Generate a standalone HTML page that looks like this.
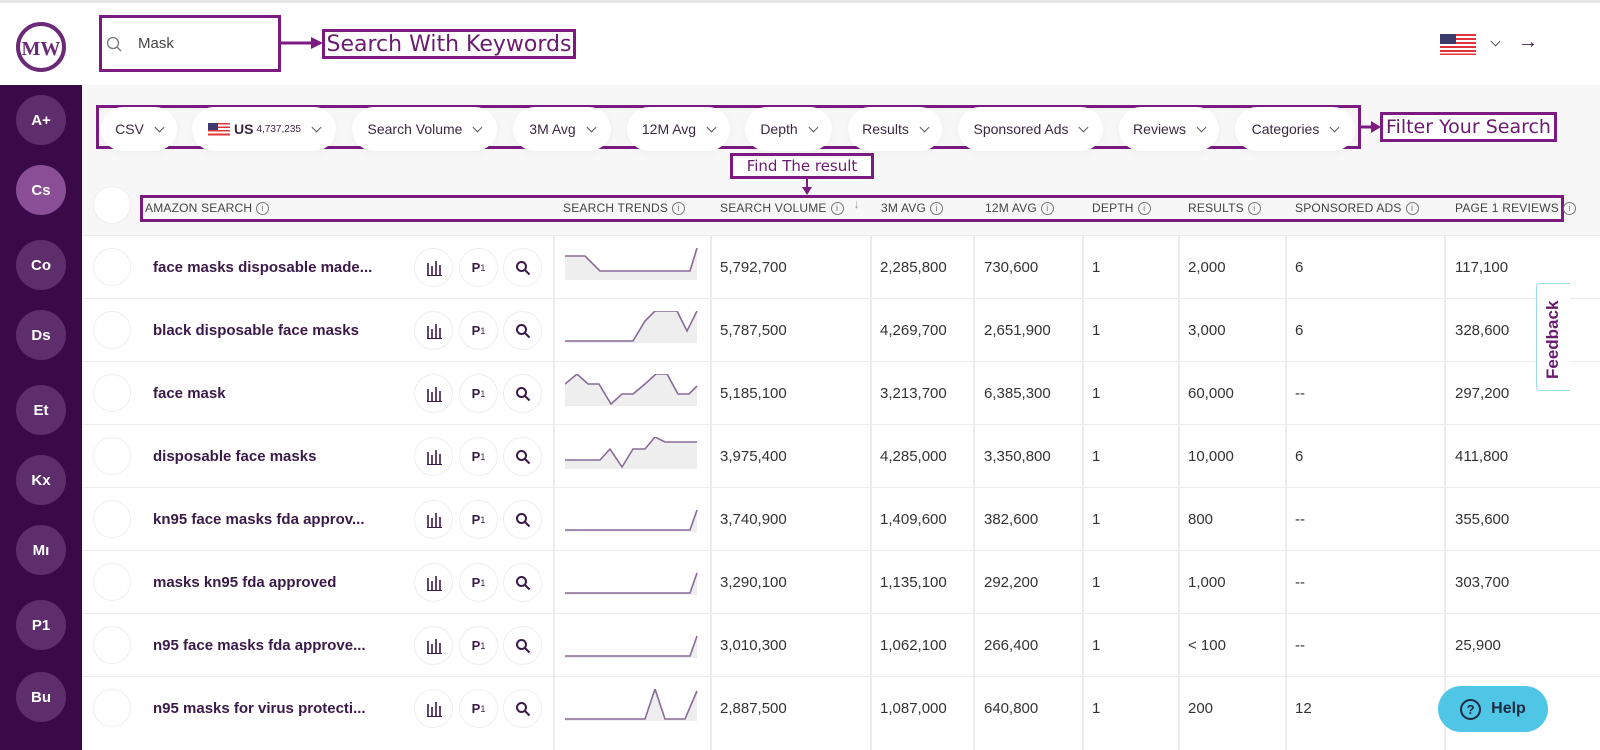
<!DOCTYPE html>
<html><head><meta charset="utf-8">
<style>
*{box-sizing:border-box;margin:0;padding:0}
body{width:1600px;height:750px;overflow:hidden;background:#fff;font-family:"Liberation Sans",sans-serif;position:relative;color:#333}
.abs{position:absolute}
.topline{left:0;top:0;width:1600px;height:3px;background:#e6e6e6}
.side{left:0;top:85px;width:82px;height:665px;background:#3a0a48}
.sc{position:absolute;left:16px;width:50px;height:50px;border-radius:50%;background:#5e2d6c;color:#fff;font-weight:bold;font-size:15px;display:flex;align-items:center;justify-content:center}
.gray{left:82px;top:85px;width:1518px;height:150px;background:#f7f7f7}
.pill{position:absolute;top:107px;height:44px;border-radius:22px;background:#fff;font-size:14px;color:#3a2a40;display:flex;align-items:center;justify-content:center;gap:8px;box-shadow:0 2px 8px rgba(0,0,0,.04)}
.chev{width:7px;height:7px;border-right:1.5px solid #555;border-bottom:1.5px solid #555;transform:rotate(45deg);margin-top:-4px;margin-left:4px}
.ann{position:absolute;border:3px solid #7b1a80;font-family:"DejaVu Sans",sans-serif;color:#6a1a70;display:flex;align-items:center;justify-content:center;background:#fff}
.hd{position:absolute;top:201px;font-size:12px;color:#444;display:flex;align-items:center;gap:4px;letter-spacing:.2px}
.i{width:13px;height:13px;border:1.3px solid #777;border-radius:50%;font-size:9px;display:inline-flex;align-items:center;justify-content:center;color:#777}
.row{position:absolute;left:82px;width:1518px;height:63px;border-top:1.5px solid #ececec}
.cell{position:absolute;top:0;height:63px;display:flex;align-items:center;font-size:15px;color:#333}
.kw{color:#3a1a48;font-weight:bold;font-size:15px}
.btn{position:absolute;top:12px;width:39px;height:39px;border:1px solid #eee;border-radius:50%;display:flex;align-items:center;justify-content:center;color:#3a1a48;font-size:13px;font-weight:bold}
.vl{position:absolute;top:235px;width:1.5px;height:515px;background:#ececec}
.chk{position:absolute;left:11px;top:12px;width:38px;height:38px;border:1px solid #eee;border-radius:50%}
</style></head><body>
<div class="abs topline"></div>
<!-- logo -->
<svg class="abs" style="left:14px;top:20px" width="54" height="54" viewBox="0 0 54 54"><circle cx="27" cy="27" r="23" fill="none" stroke="#6b2a78" stroke-width="4"/><text x="27" y="35" text-anchor="middle" font-family="Liberation Serif,serif" font-weight="bold" font-size="20" fill="#6b2a78">MW</text></svg>
<div class="ann" style="left:99px;top:15px;width:182px;height:57px;justify-content:flex-start;padding-left:4px;font-family:'Liberation Sans',sans-serif;color:#444;font-size:15px">
<svg width="16" height="16" viewBox="0 0 16 16"><circle cx="7" cy="7" r="5.5" fill="none" stroke="#777" stroke-width="1.3"/><path d="M11 11l4 4" stroke="#777" stroke-width="1.3"/></svg><span style="margin-left:16px">Mask</span></div>
<svg class="abs" style="left:281px;top:36px" width="42" height="14"><path d="M0 7H32" stroke="#7b1a80" stroke-width="3"/><path d="M30 1l12 6-12 6z" fill="#7b1a80"/></svg>
<div class="ann" style="left:322px;top:29px;width:254px;height:30px;font-size:22px">Search With Keywords</div>
<!-- flag -->
<svg class="abs" style="left:1440px;top:34px" width="36" height="21"><rect width="36" height="21" fill="#fff"/><g fill="#e0343a"><rect y="0" width="36" height="2"/><rect y="4" width="36" height="2"/><rect y="8" width="36" height="2"/><rect y="12" width="36" height="2"/><rect y="16" width="36" height="2"/><rect y="19.5" width="36" height="1.5"/></g><rect width="16" height="10" fill="#3c3b6e"/></svg>
<div class="abs chev" style="left:1488px;top:42px"></div>
<div class="abs" style="left:1518px;top:31px;font-size:20px;color:#3a1a48">→</div>

<div class="abs side"></div>
<div class="sc" style="top:95px">A+</div>
<div class="sc" style="top:165px;background:#8a4e96">Cs</div>
<div class="sc" style="top:240px">Co</div>
<div class="sc" style="top:310px">Ds</div>
<div class="sc" style="top:385px">Et</div>
<div class="sc" style="top:455px">Kx</div>
<div class="sc" style="top:525px">Mı</div>
<div class="sc" style="top:600px">P1</div>
<div class="sc" style="top:672px">Bu</div>

<div class="abs gray"></div>
<div class="ann" style="left:96px;top:105px;width:1265px;height:44px;background:transparent"></div>
<div class="pill" style="left:101px;width:76px">CSV<span class="chev"></span></div>
<div class="pill" style="left:192px;width:144px"><svg width="22" height="13"><rect width="22" height="13" fill="#fff"/><g fill="#e0343a"><rect width="22" height="1.5"/><rect y="3.5" width="22" height="1.5"/><rect y="7" width="22" height="1.5"/><rect y="10.5" width="22" height="2"/></g><rect width="10" height="7" fill="#3c3b6e"/></svg><b style="font-weight:bold;margin-left:-4px">US</b><span style="font-size:10px;margin-left:-5px">4,737,235</span><span class="chev"></span></div>
<div class="pill" style="left:352px;width:145px">Search Volume<span class="chev"></span></div>
<div class="pill" style="left:513px;width:98px">3M Avg<span class="chev"></span></div>
<div class="pill" style="left:627px;width:103px">12M Avg<span class="chev"></span></div>
<div class="pill" style="left:745px;width:87px">Depth<span class="chev"></span></div>
<div class="pill" style="left:848px;width:94px">Results<span class="chev"></span></div>
<div class="pill" style="left:958px;width:145px">Sponsored Ads<span class="chev"></span></div>
<div class="pill" style="left:1119px;width:100px">Reviews<span class="chev"></span></div>
<div class="pill" style="left:1235px;width:120px">Categories<span class="chev"></span></div>
<svg class="abs" style="left:1361px;top:120px" width="20" height="14"><path d="M0 7H12" stroke="#7b1a80" stroke-width="3"/><path d="M10 1l10 6-10 6z" fill="#7b1a80"/></svg>
<div class="ann" style="left:1380px;top:112px;width:177px;height:30px;font-size:19px">Filter Your Search</div>
<div class="ann" style="left:730px;top:153px;width:144px;height:26px;font-size:15px">Find The result</div>
<svg class="abs" style="left:801px;top:178px" width="12" height="18"><path d="M6 0V10" stroke="#7b1a80" stroke-width="2"/><path d="M1 9l5 8 5-8z" fill="#7b1a80"/></svg>

<div class="abs" style="left:93px;top:186px;width:38px;height:38px;border-radius:50%;background:#fff;border:1px solid #eee"></div>
<div class="ann" style="left:140px;top:195px;width:1424px;height:27px;background:transparent"></div>
<div class="hd" style="left:145px">AMAZON SEARCH <span class="i">i</span></div>
<div class="hd" style="left:563px">SEARCH TRENDS <span class="i">i</span></div>
<div class="hd" style="left:720px">SEARCH VOLUME <span class="i">i</span> <span style="color:#999;margin-left:6px;margin-top:-8px">↓</span></div>
<div class="hd" style="left:881px">3M AVG <span class="i">i</span></div>
<div class="hd" style="left:985px">12M AVG <span class="i">i</span></div>
<div class="hd" style="left:1092px">DEPTH <span class="i">i</span></div>
<div class="hd" style="left:1188px">RESULTS <span class="i">i</span></div>
<div class="hd" style="left:1295px">SPONSORED ADS <span class="i">i</span></div>
<div class="hd" style="left:1455px">PAGE 1 REVIEWS <span class="i">i</span></div>

<div class="vl" style="left:553px"></div><div class="vl" style="left:710px"></div><div class="vl" style="left:870px"></div><div class="vl" style="left:973px"></div><div class="vl" style="left:1082px"></div><div class="vl" style="left:1178px"></div><div class="vl" style="left:1285px"></div><div class="vl" style="left:1444px"></div>

<div id="rows"></div>
<script>
const data=[
["face masks disposable made...","5,792,700","2,285,800","730,600","1","2,000","6","117,100","0,8 20,8 35,23 125,23 132,0"],
["black disposable face masks","5,787,500","4,269,700","2,651,900","1","3,000","6","328,600","0,30 68,30 80,10 90,0 112,0 122,20 132,0"],
["face mask","5,185,100","3,213,700","6,385,300","1","60,000","--","297,200","0,10 12,0 23,10 34,10 46,30 57,20 68,20 80,10 91,0 102,0 113,20 124,20 132,12"],
["disposable face masks","3,975,400","4,285,000","3,350,800","1","10,000","6","411,800","0,23 35,23 45,12 57,30 68,12 80,12 90,0 100,5 132,5"],
["kn95 face masks fda approv...","3,740,900","1,409,600","382,600","1","800","--","355,600","0,30 125,30 132,10"],
["masks kn95 fda approved","3,290,100","1,135,100","292,200","1","1,000","--","303,700","0,30 125,30 132,10"],
["n95 face masks fda approve...","3,010,300","1,062,100","266,400","1","< 100","--","25,900","0,30 125,30 132,10"],
["n95 masks for virus protecti...","2,887,500","1,087,000","640,800","1","200","12","","0,30 80,30 90,0 100,30 120,30 132,2"]];
let h="";
data.forEach((d,i)=>{
const top=235+i*63;
h+=`<div class="row" style="top:${top}px"><div class="chk"></div>
<div class="cell kw" style="left:71px">${d[0]}</div>
<div class="btn" style="left:332px"><svg width="16" height="16"><g stroke="#3a1a48" stroke-width="1.6"><path d="M2 3V16M6 6V16M10 1V16M14 5V16"/><path d="M1 15.5H16" stroke-width="1"/></g></svg></div>
<div class="btn" style="left:377px">P<span style="font-size:9px;font-weight:normal">1</span></div>
<div class="btn" style="left:421px"><svg width="16" height="16"><circle cx="6.5" cy="6.5" r="4.5" fill="none" stroke="#3a1a48" stroke-width="2"/><path d="M10 10l4.5 4.5" stroke="#3a1a48" stroke-width="2"/></svg></div>
<svg style="position:absolute;left:483px;top:12px" width="134" height="34"><polygon points="${d[8]} 132,32 0,32" fill="#eee"/><polyline points="${d[8]}" fill="none" stroke="#8a6a98" stroke-width="1.6"/></svg>
<div class="cell" style="left:638px">${d[1]}</div>
<div class="cell" style="left:798px">${d[2]}</div>
<div class="cell" style="left:902px">${d[3]}</div>
<div class="cell" style="left:1010px">${d[4]}</div>
<div class="cell" style="left:1106px">${d[5]}</div>
<div class="cell" style="left:1213px">${d[6]}</div>
<div class="cell" style="left:1373px">${d[7]}</div></div>`;});
document.getElementById("rows").innerHTML=h;
</script>
<div class="abs" style="left:1536px;top:283px;width:34px;height:108px;background:#fff;border:1px solid #9bdbe8;border-right:none;border-radius:4px 0 0 4px"><div style="position:absolute;left:6px;top:95px;transform:rotate(-90deg);transform-origin:0 0;font-size:17px;font-weight:bold;color:#6a1a70;white-space:nowrap">Feedback</div></div>
<div class="abs" style="left:1438px;top:686px;width:110px;height:46px;border-radius:23px;background:#4fc6e6;display:flex;align-items:center;justify-content:center;gap:10px;font-weight:bold;font-size:16px;color:#1e2a40"><span style="width:21px;height:21px;border:2px solid #1e2a40;border-radius:50%;display:inline-flex;align-items:center;justify-content:center;font-size:13px">?</span>Help</div>
</body></html>
